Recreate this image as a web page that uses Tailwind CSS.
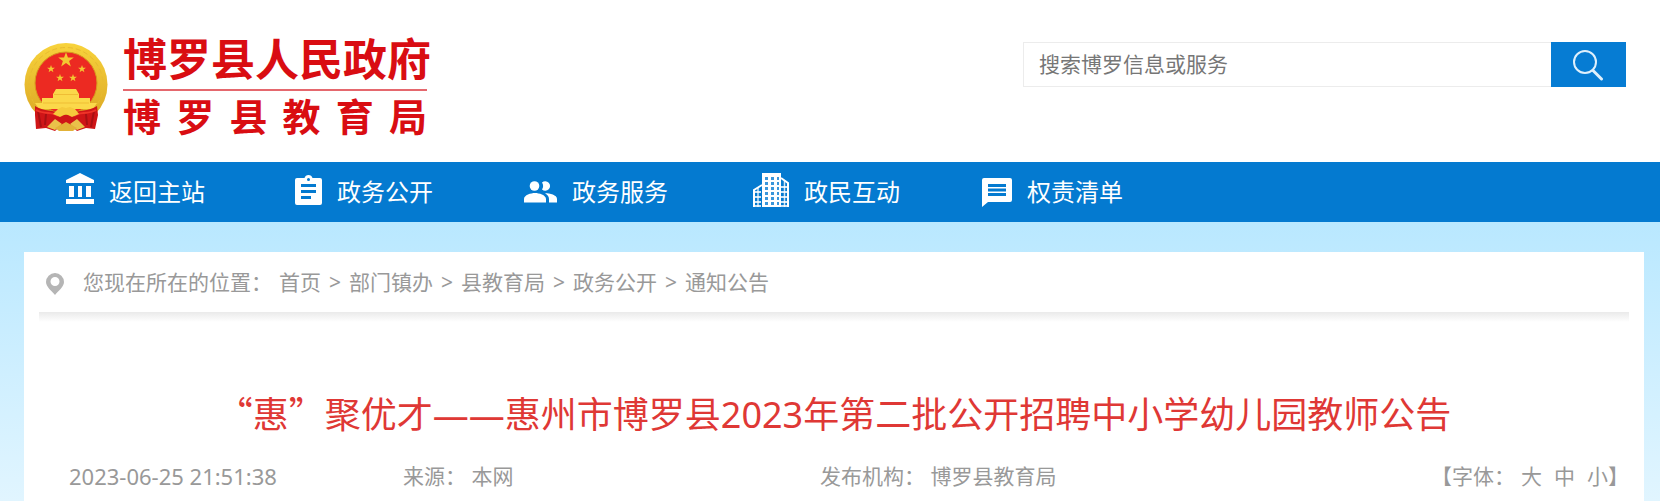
<!DOCTYPE html>
<html lang="zh-CN">
  <head>
    <meta charset="UTF-8" />
    <meta name="viewport" content="width=device-width, initial-scale=1.0" />
    <title>博罗县教育局</title>
    <script src="https://cdn.jsdelivr.net/npm/@tailwindcss/browser@4"></script>
  </head>
  <body class="min-h-screen flex flex-col bg-white font-['Noto_Sans','Noto_Sans_CJK_SC',sans-serif] text-[21px] leading-8">
    <!-- Header -->
    <header class="h-[162px] flex items-start justify-between pl-6 pr-[34px]">
      <a href="#" class="flex gap-[15px] pt-[37px]">
        <svg class="w-[84px] h-[90px] mt-[5px]" viewBox="0 0 84 90">
          <defs>
            <linearGradient id="gold" x1="0" y1="0" x2="0" y2="1">
              <stop offset="0" stop-color="#f8d33c" />
              <stop offset="1" stop-color="#d9a422" />
            </linearGradient>
            <path id="star" d="M0-6 1.5-2H6L2.4.7 3.7 5 0 2.4-3.7 5-2.4.7-6-2h4.5z" />
          </defs>
          <circle cx="42" cy="42.500" r="41.500" fill="url(#gold)" />
          <circle cx="42" cy="42.500" r="37" fill="none" stroke="#e8bb30" stroke-width="1" stroke-dasharray="5 3" />
          <circle cx="42" cy="41" r="31" fill="#ec2a22" stroke="#d79a1e" />
          <g fill="#f3c832">
            <use href="#star" transform="translate(42 18) scale(1.300)" />
            <use href="#star" transform="translate(27 27) scale(.65)" />
            <use href="#star" transform="translate(58 27) scale(.65)" />
            <use href="#star" transform="translate(36 36) scale(.65)" />
            <use href="#star" transform="translate(49 36) scale(.65)" />
          </g>
          <path d="M32 47h20l3 5v4h11v5h7l-4 6H15l-4-6h7v-5h11v-4z" fill="#fbd84a" />
          <path d="M30 52.500h24M19 61h46" stroke="#efbd35" />
          <path d="M11 64c8 6 20 3 26 9h10c6-6 18-3 26-9l1 9-3 14-9-1-9 3-6-6H37l-6 6-9-3-10 1-1-14z" fill="#cf1517" />
          <path d="M14 69l3 16M22 72l-1 11M70 69l-3 16M62 72l1 11" stroke="#a81013" stroke-width="2" />
          <path d="M12 68c9 5 17 1 22 6M72 68c-9 5-17 1-22 6" stroke="#ef3328" stroke-width="2" fill="none" />
          <path d="M34 67l4-2 4 1 4-1 5 2 4 5-7 3-6-3-6 3-7-3z" fill="#f5ca3c" />
          <path d="M23 85l8-8 7 5-7 6zM61 85l-8-8-7 5 7 6z" fill="#eac14a" />
          <path d="M31 86l11-6 11 6-4 3H35z" fill="#e2b238" />
        </svg>
        <span class="flex flex-col text-[#d90d12]">
          <span class="text-[44px] leading-[44px] font-bold">博罗县人民政府</span>
          <span class="h-[2px] mt-2 mr-1 bg-[#e5686e]"></span>
          <span class="flex justify-between mt-[5px] mr-1 text-[38px] leading-[40px] font-bold">
            <span>博</span><span>罗</span><span>县</span><span>教</span><span>育</span><span>局</span>
          </span>
        </span>
      </a>

      <form class="flex mt-[42px] w-[603px] h-[45px]">
        <label for="search" class="sr-only">搜索</label>
        <input id="search" type="text" placeholder="搜索博罗信息或服务" class="flex-1 min-w-0 px-[15px] leading-[43px] border border-r-0 border-[#ececec] placeholder:text-[#767676] outline-none" />
        <button type="submit" aria-label="搜索" class="w-[75px] bg-[#067cd3] flex items-center justify-center">
          <svg class="w-8 h-8" viewBox="0 0 32 32" fill="none" stroke="#dff0fc">
            <circle cx="12" cy="13" r="11" stroke-width="2" />
            <path d="M20 21.500l8.500 8.500" stroke-width="3" stroke-linecap="round" />
          </svg>
        </button>
      </form>
    </header>

    <!-- Main nav -->
    <nav class="h-[60px] bg-[#047ad0] pl-[66px] flex items-center text-white text-2xl">
      <a href="#" class="w-[229px] flex items-center gap-[15px]">
        <svg class="w-7 h-8 -mt-2" viewBox="0 0 28 32" fill="currentColor">
          <path d="M14 1 28 8v3H0V8zM3 14h5v11H3zM12 14h4v11h-4zM20 14h5v11h-5zM0 27h28v5H0z" />
        </svg>
        返回主站
      </a>
      <a href="#" class="w-[229px] flex items-center gap-[15px]">
        <svg class="w-[27px] h-[30px] -mt-1" viewBox="0 0 27 30" fill="currentColor">
          <path fill-rule="evenodd" d="M2 3h7.500a4.200 4.200 0 0 1 8 0H25a2 2 0 0 1 2 2v23a2 2 0 0 1-2 2H2a2 2 0 0 1-2-2V5a2 2 0 0 1 2-2zm11.500 0a1.500 1.500 0 1 0 0 3 1.500 1.500 0 0 0 0-3zM6 9v3h15V9zm0 6v3h15v-3zm0 6v3h10v-3z" />
        </svg>
        政务公开
      </a>
      <a href="#" class="w-[229px] flex items-center gap-[15px]">
        <svg class="w-[33px] h-[22px]" viewBox="0 0 33 22" fill="currentColor">
          <circle cx="10.500" cy="5" r="4.800" />
          <path d="M18 1.500a4.800 4.800 0 1 1 0 7c1.500-2 1.500-5 0-7zM0 21.500V18c0-4 7-6 11-6s11 2 11 6v3.500zM21 12.300c5 0 12 1.700 12 5.700v3.500h-8V18c0-2.500-1.500-4.300-4-5.700z" />
        </svg>
        政务服务
      </a>
      <a href="#" class="w-[229px] flex items-center gap-[15px]">
        <svg class="w-9 h-[34px] -mt-1" viewBox="0 0 36 34" fill="none" stroke="currentColor">
          <path d="M9 0h19v34H9z" fill="currentColor" stroke="none" />
          <path d="M9 12 1 17v17M28 5l7 5v24" stroke-width="2" />
          <path d="M5 15v19M31.500 8v26" stroke-width="1.500" stroke-opacity=".8" />
          <path d="M1 19h7M1 24h7M1 29h7M1 33h7M28 14h7M28 19h7M28 24h7M28 29h7M28 33h7" stroke-width="2" stroke-opacity=".8" />
          <g stroke="#3a96da" stroke-width="3" stroke-dasharray="3 3">
            <path d="M12 5.500h14M12 10.500h14M12 15.500h14M12 20.500h14M12 25.500h14M12 30.500h14" />
          </g>
        </svg>
        政民互动
      </a>
      <a href="#" class="flex items-center gap-[15px]">
        <svg class="w-[30px] h-[30px]" viewBox="0 0 30 30" fill="currentColor">
          <path fill-rule="evenodd" d="M2 1h26a2 2 0 0 1 2 2v20a2 2 0 0 1-2 2H6l-6 5V3a2 2 0 0 1 2-2zm4 6v3h18V7zm0 4.500v3h18v-3zm0 4.500v3h18v-3z" />
        </svg>
        权责清单
      </a>
    </nav>

    <!-- Article -->
    <main class="grow bg-linear-to-b from-[#b9e8ff] to-[#e1f5ff] pt-[30px] pl-6 pr-4 flex">
      <div class="w-full bg-white px-[15px] text-[#999]">
        <div class="h-[60px] flex items-center pl-[7px]">
          <svg class="w-[18px] h-[22px] mt-1 mr-[19px]" viewBox="0 0 18 22">
            <path fill="#b5b5b5" fill-rule="evenodd" d="M9 0a9 9 0 0 1 9 9c0 5-6 9-9 13-3-4-9-8-9-13a9 9 0 0 1 9-9zm0 4a4.500 4.500 0 1 0 0 9 4.500 4.500 0 0 0 0-9z" />
          </svg>
          <span class="mr-[7px]">您现在所在的位置：</span>
          <div class="flex gap-2">
            <a href="#">首页</a>
            <span>&gt;</span>
            <a href="#">部门镇办</a>
            <span>&gt;</span>
            <a href="#">县教育局</a>
            <span>&gt;</span>
            <a href="#">政务公开</a>
            <span>&gt;</span>
            <a href="#">通知公告</a>
          </div>
        </div>
        <div class="h-[10px] bg-linear-to-b from-[#eaeaea] to-white"></div>

        <h1 class="mt-[66px] text-center text-4xl leading-[48px] text-[#df3835]">
          <span class="font-['Noto_Sans_CJK_SC',sans-serif]">“惠”</span>聚优才——惠州市博罗县2023年第二批公开招聘中小学幼儿园教师公告
        </h1>

        <div class="mt-[21px] pl-[30px] grid grid-cols-[334fr_417fr_809fr]">
          <time class="text-[22px]">2023-06-25 21:51:38</time>
          <span>来源： 本网</span>
          <div class="flex justify-between">
            <span>发布机构： 博罗县教育局</span>
            <div class="flex">
              <span class="mr-[6px]">【字体：</span>
              <div class="flex gap-3">
                <button type="button">大</button>
                <button type="button">中</button>
                <button type="button">小</button>
              </div>
              <span>】</span>
            </div>
          </div>
        </div>
      </div>
    </main>
  </body>
</html>
